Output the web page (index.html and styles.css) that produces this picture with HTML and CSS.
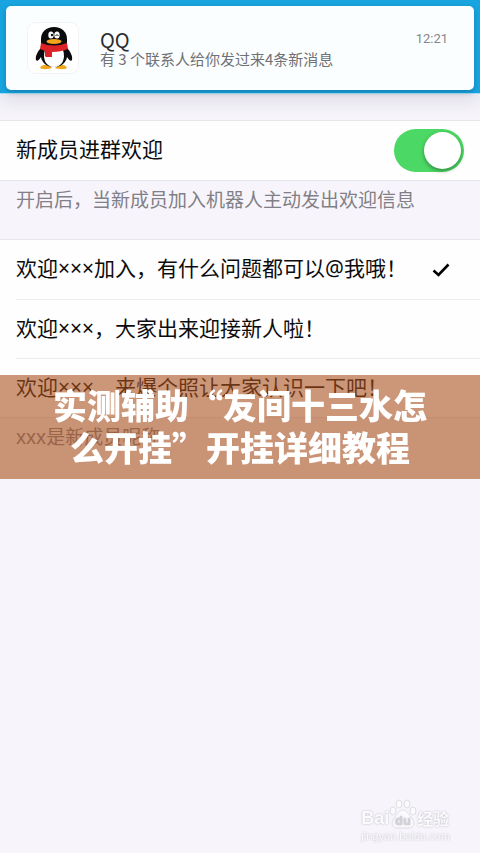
FILE: index.html
```html
<!DOCTYPE html>
<html lang="zh-CN">
<head>
    <meta charset="UTF-8">
    <meta name="viewport" content="width=device-width, initial-scale=1.0">
    <title>新成员进群欢迎</title>
    <link rel="stylesheet" href="styles.css">
</head>
<body>
    <header class="top-bar">
        <div class="notification">
            <svg class="app-icon" viewBox="0 0 52 52" aria-hidden="true">
                <rect x=".5" y=".5" width="51" height="51" rx="8" fill="#fff" stroke="#f3f3f6"/>
                <path d="M13 46c1-3 5-4 9-3l3 3c-2 1-10 2-12 0zM40 46c-1-3-5-4-9-3l-3 3c2 1 10 2 12 0z" fill="#f3a51c"/>
                <path d="M14 26c-3 3-6 8-5 12 1 2 3 0 5-3 1 6 6 10 13 10s12-4 13-10c2 3 4 5 5 3 1-4-2-9-5-12z" fill="#0b0b0d"/>
                <path d="M14 25V17C14 10 19 5 27 5s13 5 13 12v8z" fill="#0b0b0d"/>
                <path d="M18 28c-3 9 1 17 9 17s12-8 9-17z" fill="#fff"/>
                <ellipse cx="24" cy="13" rx="2.700" ry="3.500" fill="#fff"/>
                <ellipse cx="30" cy="13" rx="2.700" ry="3.500" fill="#fff"/>
                <circle cx="25" cy="13" r="1.200" fill="#111"/>
                <path d="M28.500 14q1.500-3 3 0" fill="none" stroke="#111"/>
                <ellipse cx="27" cy="19.500" rx="7.500" ry="2.500" fill="#f3a51c"/>
                <path d="M14 21q13 5 26 0l1 6c-5 2-10 3-16 3v5h-6l-1-1v-5l-5-2z" fill="#dc2127"/>
            </svg>
            <div class="notification-text">
                <div class="app-name">QQ</div>
                <div class="summary">有 3 个联系人给你发过来4条新消息</div>
            </div>
            <time class="time">12:21</time>
        </div>
    </header>

    <main>
        <section class="group">
            <div class="row">
                <label for="welcome">新成员进群欢迎</label>
                <input class="switch" type="checkbox" role="switch" id="welcome" checked>
            </div>
        </section>
        <p class="note">开启后，当新成员加入机器人主动发出欢迎信息</p>

        <ul class="group options">
            <li class="row">
                <span>欢迎×××加入，有什么问题都可以@我哦！</span>
                <svg class="check" viewBox="0 0 18 14" aria-hidden="true">
                    <path d="M1.500 7.500L6.500 12L16.500 1.500" fill="none" stroke="#000" stroke-width="2.600"/>
                </svg>
            </li>
            <li class="row"><span>欢迎×××，大家出来迎接新人啦！</span></li>
            <li class="row"><span>欢迎×××，来爆个照让大家认识一下吧！</span></li>
        </ul>
        <p class="note">xxx是新成员呢称</p>
    </main>

    <div class="caption">
        <h1>实测辅助“友间十三水怎么开挂”开挂详细教程</h1>
    </div>

    <div class="watermark">
        <div class="brand">
            <span>Bai</span>
            <svg class="paw" viewBox="0 0 28 30" aria-hidden="true">
                <g fill="#fbfafd" stroke="#dddce2">
                    <ellipse cx="4" cy="12" rx="3" ry="4"/>
                    <ellipse cx="10" cy="5" rx="3" ry="4"/>
                    <ellipse cx="18" cy="5" rx="3" ry="4"/>
                    <ellipse cx="24" cy="12" rx="3" ry="4"/>
                    <path d="M14 11c-4 0-5 4-8 7-5 5-3 11 2 11h12c5 0 7-6 2-11-3-3-4-7-8-7z"/>
                </g>
                <text x="14" y="26" text-anchor="middle">du</text>
            </svg>
            <span class="brand-cn">经验</span>
        </div>
        <div class="site">jingyan.baidu.com</div>
    </div>
</body>
</html>
```

FILE: styles.css
```css
* {
    box-sizing: border-box;
}

body {
    margin: 0;
    min-height: 100vh;
    background-color: #f7f5fb;
    color: #0c0c0e;
    font-family: "Noto Sans", "Noto Sans CJK SC", sans-serif;
    font-size: 21px;
    line-height: 30px;
}

.top-bar {
    padding: 6px 6px 3px;
    background-color: #18a5df;
    border-bottom: 1px solid #a5dcf5;
    box-shadow: 0 4px 20px rgba(40, 30, 60, 0.16);
}

.notification {
    display: flex;
    align-items: center;
    height: 84px;
    padding: 0 26px 0 21px;
    background-color: #fbfefe;
    border-radius: 5px;
    box-shadow: 0 2px 5px rgba(0, 40, 70, 0.3);
}

.app-icon {
    width: 52px;
    height: 52px;
}

.notification-text {
    flex: 1;
    margin-left: 21px;
    font-family: "Noto Sans CJK SC", sans-serif;
}

.app-name {
    padding-top: 2px;
    font-size: 20px;
    line-height: 20px;
    color: #2c2c32;
}

.summary {
    font-size: 15px;
    line-height: 18px;
    color: #707176;
}

.time {
    align-self: flex-start;
    margin-top: 23px;
    font-family: Roboto, sans-serif;
    font-size: 13px;
    line-height: 20px;
    color: #85868b;
}

.group {
    margin: 26px 0 0;
    padding: 0;
    background-color: #fefefe;
    border-top: 1px solid #e6e5ea;
    border-bottom: 1px solid #e6e5ea;
    list-style: none;
}

.row {
    display: flex;
    align-items: center;
    justify-content: space-between;
    min-height: 59px;
    padding-right: 16px;
    margin-left: 16px;
}

.row + .row {
    border-top: 1px solid #ececef;
}

.row label,
.row span {
    padding-bottom: 3px;
}

.options {
    margin-top: 0;
}

.note {
    margin: 0;
    padding: 4px 16px 24px;
    font-size: 19px;
    color: #818086;
}

.switch {
    appearance: none;
    display: flex;
    width: 70px;
    height: 43px;
    margin: 0;
    padding: 3px;
    border-radius: 22px;
    background-color: #d9d9de;
}

.switch::before {
    content: "";
    width: 37px;
    height: 37px;
    border-radius: 50%;
    background-color: #fff;
    box-shadow: 0 2px 4px rgba(0, 0, 0, 0.35);
}

.switch:checked {
    justify-content: flex-end;
    background-color: #4cd864;
}

.check {
    width: 18px;
    height: 14px;
    margin-right: 14px;
}

/* title band across the middle of the screen */
.caption {
    position: fixed;
    top: 50%;
    left: 0;
    right: 0;
    transform: translateY(-50%);
    padding: 9px 48px 11px;
    background-color: rgba(170, 82, 30, 0.6);
}

.caption h1 {
    margin: 0;
    font-family: "Noto Sans CJK SC", sans-serif;
    font-size: 34px;
    font-weight: 900;
    line-height: 42px;
    color: #fff;
    text-align: center;
}

.watermark {
    position: fixed;
    right: 30px;
    bottom: 10px;
    color: #fbfafd;
    text-shadow: 0 0 2px #b4b3bb;
}

.brand {
    display: flex;
    align-items: flex-end;
    font-family: "Liberation Sans", sans-serif;
    font-size: 18px;
    font-weight: bold;
    line-height: 22px;
}

.brand-cn {
    font-family: "Noto Sans CJK SC", sans-serif;
    font-size: 16px;
}

.paw {
    width: 28px;
    height: 30px;
}

.paw text {
    font-size: 13px;
    fill: #d2d1d8;
}

.site {
    font-family: "Liberation Sans", sans-serif;
    font-size: 11px;
    line-height: 14px;
}
```
